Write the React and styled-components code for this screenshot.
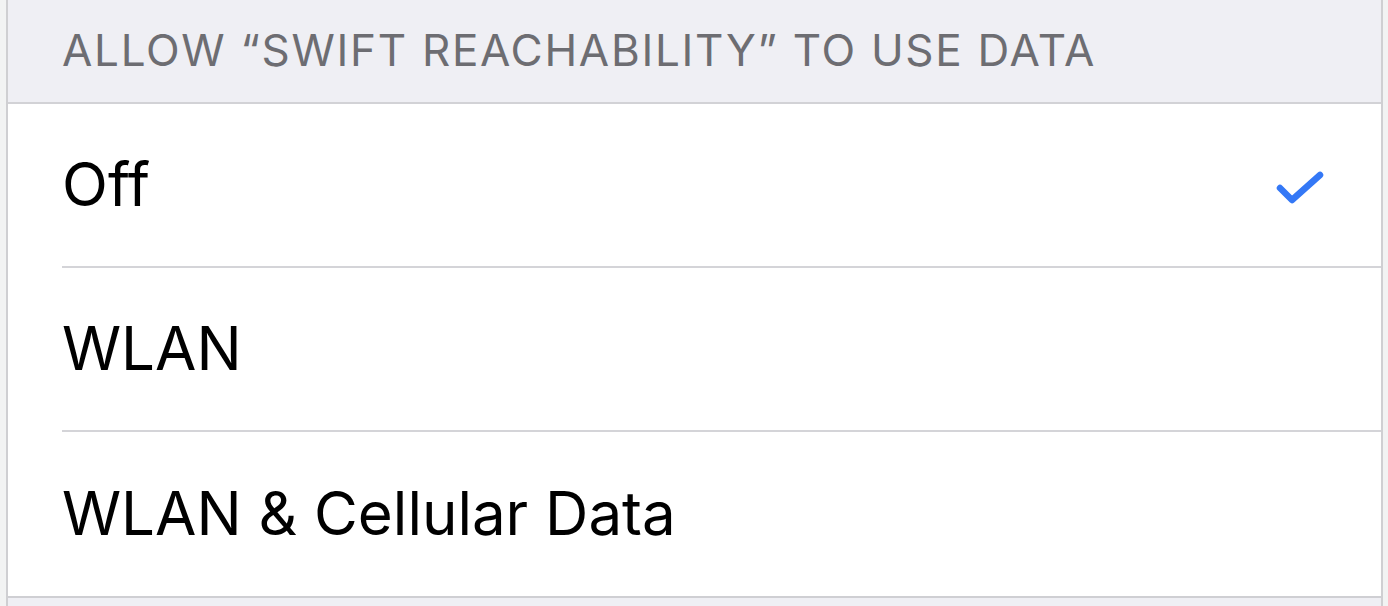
import React from 'react';
import styled, { createGlobalStyle } from 'styled-components';

const Global = createGlobalStyle`
  html, body { margin: 0; padding: 0; background: #f2f3f3; }
  body { font-family: Inter, "Liberation Sans", sans-serif; -webkit-font-smoothing: antialiased; }
`;

const Frame = styled.div`
  width: 1388px;
  height: 606px;
  padding: 0 5px 0 6px;
  box-sizing: border-box;
  background: #f2f3f3;
  overflow: hidden;
`;

const Panel = styled.div`
  height: 100%;
  border-left: 2px solid #cfcfd2;
  border-right: 2px solid #cfcfd2;
  background: #efeff4;
  display: flex;
  flex-direction: column;
`;

const SectionHeader = styled.div`
  height: 104px;
  flex-shrink: 0;
  box-sizing: border-box;
  padding: 0 0 2px 54px;
  display: flex;
  align-items: center;
  color: #6d6d72;
  font-size: 44px;
  letter-spacing: 1.7px;
  text-transform: uppercase;
  border-bottom: 2px solid #d2d2d6;
`;

const List = styled.div`
  background: #fff;
  border-bottom: 2px solid #cfcfd3;
`;

const Row = styled.div`
  height: 164px;
  box-sizing: border-box;
  padding-left: 54px;
  display: flex;
`;

const RowInner = styled.div`
  flex: 1;
  display: flex;
  align-items: center;
  justify-content: space-between;
  padding-right: 55px;
  border-bottom: ${(p) => (p.last ? 'none' : '2px solid #d4d4d8')};
`;

const Label = styled.span`
  font-size: 60px;
  color: #000;
  margin-bottom: 2px;
`;

const CheckMark = styled.svg`
  margin-top: 12px;
`;

const Check = () => (
  <CheckMark width="50" height="40" viewBox="0 0 50 40">
    <path d="M4 17 L16 29 L44 4" fill="none" stroke="#3478f6" strokeWidth="6.5" strokeLinecap="round" strokeLinejoin="round" />
  </CheckMark>
);

const options = [
  { label: 'Off', checked: true },
  { label: 'WLAN' },
  { label: 'WLAN & Cellular Data' },
];

export default function App() {
  return (
    <Frame>
      <Global />
      <Panel>
        <SectionHeader>Allow “Swift Reachability” to use data</SectionHeader>
        <List>
          {options.map((o, i) => (
            <Row key={o.label}>
              <RowInner last={i === options.length - 1}>
                <Label>{o.label}</Label>
                {o.checked && <Check />}
              </RowInner>
            </Row>
          ))}
        </List>
      </Panel>
    </Frame>
  );
}
